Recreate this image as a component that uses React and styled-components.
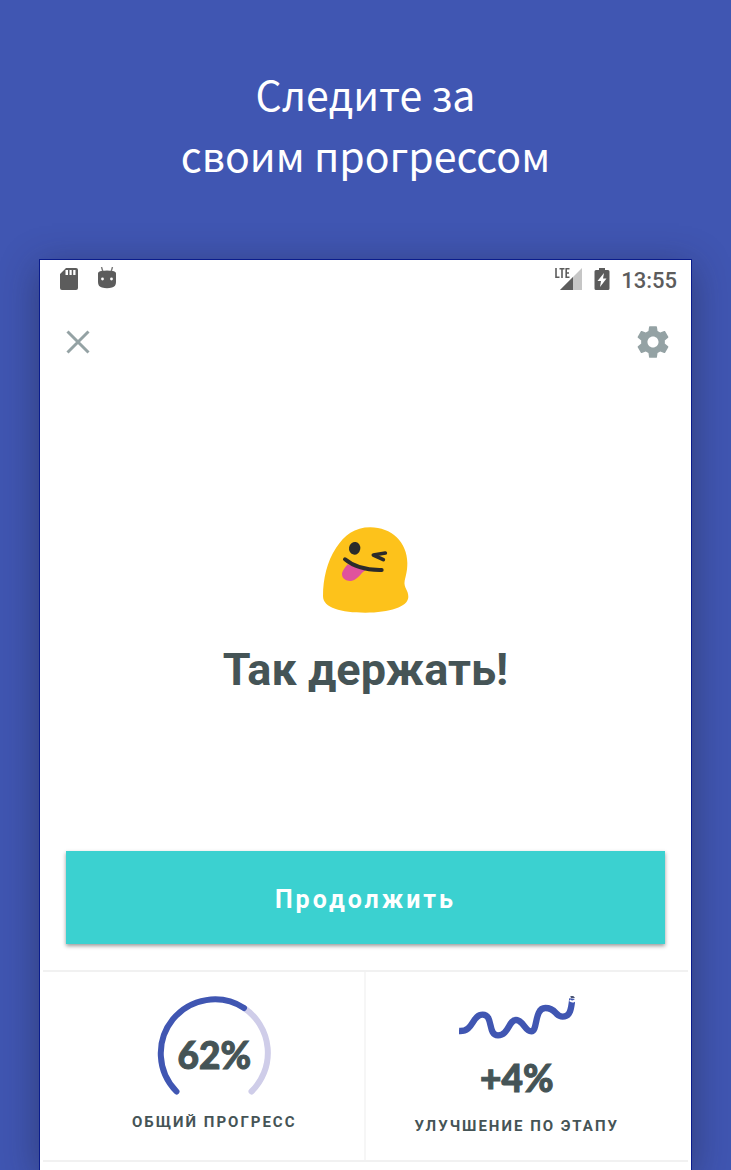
import React from "react";
import styled, { createGlobalStyle } from "styled-components";

const GlobalStyle = createGlobalStyle`
  * {
    box-sizing: border-box;
  }
  body {
    margin: 0;
    background: #4056b2;
    font-family: Roboto, "Noto Sans", sans-serif;
    color: #455456;
  }
  h1, h2, p {
    margin: 0;
  }
`;

const App = () => {
  return (
    <Page>
      <GlobalStyle />
      <Headline>
        Следите за
        <br />
        своим прогрессом
      </Headline>
      <Screen>
        <StatusBar>
          <StatusGroup $gap="18px">
            <CardIcon />
            <DroidIcon />
          </StatusGroup>
          <StatusGroup $gap="11px">
            <SignalIcon />
            <BatteryIcon />
            <Clock>13:55</Clock>
          </StatusGroup>
        </StatusBar>
        <Toolbar>
          <IconButton aria-label="Закрыть">
            <CloseIcon />
          </IconButton>
          <IconButton aria-label="Настройки">
            <GearIcon />
          </IconButton>
        </Toolbar>
        <Message>
          <BlobEmoji />
          <Title>Так держать!</Title>
        </Message>
        <ContinueButton type="button">Продолжить</ContinueButton>
        <Stats>
          <Stat>
            <Gauge>
              <GaugeArc />
              <Value>62%</Value>
            </Gauge>
            <Label>ОБЩИЙ ПРОГРЕСС</Label>
          </Stat>
          <Stat>
            <Squiggle />
            <Value $spaced>+4%</Value>
            <Label>УЛУЧШЕНИЕ ПО ЭТАПУ</Label>
          </Stat>
        </Stats>
      </Screen>
    </Page>
  );
};

const CardIcon = () => (
  <svg width="20" height="24" viewBox="0 0 20 24">
    <path
      fill="#5c5c5c"
      fillRule="evenodd"
      d="M7 1H17Q19 1 19 3V21Q19 23 17 23H3Q1 23 1 21V7ZM6.500 3V8H9V3ZM10.500 3V8H12.700V3ZM14.200 3V8H16.500V3Z"
    />
  </svg>
);

const DroidIcon = () => (
  <svg width="20" height="24" viewBox="0 0 20 24">
    <path d="M4.500 0L6 5M15.500 0L14 5" stroke="#777" strokeWidth="1.4" />
    <path
      fill="#5c5c5c"
      d="M1 6.500Q1 4.500 4.500 4Q10 3.200 15.500 4Q19 4.500 19 6.500V15Q19 19.500 15 20.500Q10 22 5 20.500Q1 19.500 1 15Z"
    />
    <circle cx="5.500" cy="12" r="1.400" fill="#fff" />
    <circle cx="14.500" cy="12" r="1.400" fill="#fff" />
  </svg>
);

const SignalIcon = () => (
  <svg width="28" height="24" viewBox="0 0 28 24">
    <path d="M27 1V23H5Z" fill="#c6c6c6" />
    <path d="M18 10V23H5Z" fill="#5c5c5c" />
    <path d="M0 0H15V11L11 13H0Z" fill="#fff" />
    <path
      d="M1 1V10.200H4.500M4.500 1.800H9.500M7 1.800V11M14.500 1.800H11.200V10.200H14.500M11.200 6H14"
      fill="none"
      stroke="#5c5c5c"
      strokeWidth="1.600"
    />
  </svg>
);

const BatteryIcon = () => (
  <svg width="16" height="24" viewBox="0 0 16 24">
    <path
      fill="#5c5c5c"
      fillRule="evenodd"
      d="M5 1H11V3H14Q15.500 3 15.500 4.500V21.500Q15.500 23 14 23H2Q.5 23 .5 21.500V4.500Q.5 3 2 3H5ZM10 6L3.500 14H7L6 20L12.500 11.500H9Z"
    />
  </svg>
);

const CloseIcon = () => (
  <svg width="24" height="24" viewBox="0 0 24 24">
    <path d="M1.500 1.500L22.500 22.500M22.500 1.500L1.500 22.500" stroke="#94a2a4" strokeWidth="3" />
  </svg>
);

const GearIcon = () => (
  <svg width="38" height="38" viewBox="0 0 24 24">
    <path
      fill="#94a2a4"
      d="M19.430 12.980c.04-.32.07-.64.07-.98s-.03-.66-.07-.98l2.110-1.650c.19-.15.24-.42.12-.64l-2-3.460c-.12-.22-.39-.3-.61-.22l-2.490 1c-.52-.4-1.080-.73-1.690-.98l-.38-2.650C14.460 2.180 14.250 2 14 2h-4c-.25 0-.46.18-.49.42l-.38 2.650c-.61.25-1.170.59-1.690.98l-2.490-1c-.23-.09-.49 0-.61.22l-2 3.460c-.13.22-.07.49.12.64l2.110 1.650c-.04.32-.07.65-.07.98s.03.66.07.98l-2.110 1.650c-.19.15-.24.42-.12.64l2 3.460c.12.22.39.3.61.22l2.490-1c.52.4 1.080.73 1.690.98l.38 2.650c.03.24.24.42.49.42h4c.25 0 .46-.18.49-.42l.38-2.650c.61-.25 1.170-.59 1.690-.98l2.490 1c.23.09.49 0 .61-.22l2-3.460c.12-.22.07-.49-.12-.64l-2.110-1.650zM12 15.500c-1.930 0-3.500-1.570-3.500-3.500s1.570-3.500 3.500-3.500 3.500 1.570 3.500 3.500-1.570 3.500-3.500 3.500z"
    />
  </svg>
);

const BlobEmoji = () => (
  <svg width="87" height="86" viewBox="65 50 261 258" aria-hidden="true">
    <path
      fill="#fdc21b"
      d="M210 51C273 51 321 96 321 158C321 183 316 198 313 211C309 232 325 239 324 260C323 290 267 307 195 307C123 307 68 293 68 257C68 206 80 154 107 113C132 75 163 51 210 51Z"
    />
    <path
      fill="#e0529c"
      d="M142 162Q124 182 125 193C127 207 141 214 155 211C175 207 178 190 196 180Z"
    />
    <path
      d="M134 147C160 169 202 180 244 179"
      fill="none"
      stroke="#2b2b2b"
      strokeWidth="12"
      strokeLinecap="round"
    />
    <ellipse cx="163" cy="114" rx="17" ry="19" fill="#2b2b2b" transform="rotate(10 163 114)" />
    <path
      d="M255 128L219 134L249 148"
      fill="none"
      stroke="#2b2b2b"
      strokeWidth="11"
      strokeLinecap="round"
      strokeLinejoin="round"
    />
  </svg>
);

const GaugeArc = () => (
  <svg width="114" height="102" viewBox="0 0 114 102">
    <g fill="none" strokeWidth="6" strokeLinecap="round">
      <path d="M87 12A54 54 0 0 1 94.500 95.500" stroke="#cfcde9" />
      <path d="M19.500 95.500A54 54 0 0 1 87 12" stroke="#4056b2" />
    </g>
  </svg>
);

const Squiggle = () => (
  <svg width="116" height="43" viewBox="177 50 348 129">
    <path
      d="M177 155C222 158 215 106 248 106S262 168 294 168S326 122 348 122S374 156 394 156S402 86 436 86S464 112 488 112S514 85 517 58"
      fill="none"
      stroke="#4056b2"
      strokeWidth="19"
    />
    <path d="M509 63Q518 71 527 61" fill="none" stroke="#fff" strokeWidth="6" />
    <path d="M511 50H520L525 56L513 57Z" fill="#4a5575" />
  </svg>
);

const Page = styled.div`
  display: flex;
  flex-direction: column;
  min-height: 100vh;
  overflow: hidden;
`;

const Headline = styled.h1`
  padding: 63px 24px 74px;
  font-family: "Noto Sans CJK SC", "Noto Sans", sans-serif;
  font-size: 41px;
  font-weight: 400;
  line-height: 61px;
  text-align: center;
  color: #fff;
`;

const Screen = styled.main`
  flex: 1;
  display: flex;
  flex-direction: column;
  margin: 0 39px;
  padding-bottom: 8px;
  background: #fff;
  border: 1px solid #0a1c8c;
  border-bottom: 0;
  box-shadow: 0 8px 36px rgba(30, 30, 50, 0.45);
`;

const StatusBar = styled.div`
  display: flex;
  justify-content: space-between;
  align-items: center;
  height: 38px;
  padding: 0 14px 0 19px;
`;

const StatusGroup = styled.div`
  display: flex;
  align-items: center;
  gap: ${(props) => props.$gap};
`;

const Clock = styled.span`
  padding-top: 4px;
  font-size: 22px;
  font-weight: 500;
  line-height: 24px;
  color: #5c5c5c;
`;

const Toolbar = styled.div`
  display: flex;
  justify-content: space-between;
  padding: 20px 14px;
`;

const IconButton = styled.button`
  display: flex;
  align-items: center;
  justify-content: center;
  width: 48px;
  height: 48px;
  padding: 0;
  border: 0;
  background: none;
`;

const Message = styled.section`
  flex: 1;
  display: flex;
  flex-direction: column;
  align-items: center;
  justify-content: center;
  gap: 29px;
  padding-bottom: 12px;
`;

const Title = styled.h2`
  font-size: 45px;
  font-weight: 700;
  line-height: 56px;
`;

const ContinueButton = styled.button`
  height: 93px;
  margin: 0 26px 26px;
  padding: 4px 0 0;
  border: 0;
  background: #3bd1d0;
  box-shadow: 0 2px 4px rgba(0, 0, 0, 0.4);
  font-family: inherit;
  font-size: 25px;
  font-weight: 700;
  letter-spacing: 3px;
  color: #fff;
`;

const Stats = styled.section`
  display: grid;
  grid-template-columns: 1fr 1fr;
  height: 192px;
  margin: 0 3px;
  border: solid #f1f1f1;
  border-width: 2px 0;
`;

const Stat = styled.div`
  display: flex;
  flex-direction: column;
  align-items: center;
  padding: 24px 20px 0 0;

  &:first-child {
    padding: 24px 0 0 22px;
    border-right: 2px solid #f6f6f6;
  }
`;

const Gauge = styled.div`
  display: grid;
  place-items: center;
  margin-bottom: 12px;

  > * {
    grid-area: 1 / 1;
  }
`;

const Value = styled.strong`
  margin: ${(props) => (props.$spaced ? "19px 0 16px" : "16px 0 0")};
  font-family: Lato, sans-serif;
  font-size: 37px;
  font-weight: 900;
  line-height: 40px;
  -webkit-text-stroke: 1px currentColor;
`;

const Label = styled.p`
  font-size: 15px;
  font-weight: 700;
  line-height: 24px;
  letter-spacing: 2px;
`;

export default App;
